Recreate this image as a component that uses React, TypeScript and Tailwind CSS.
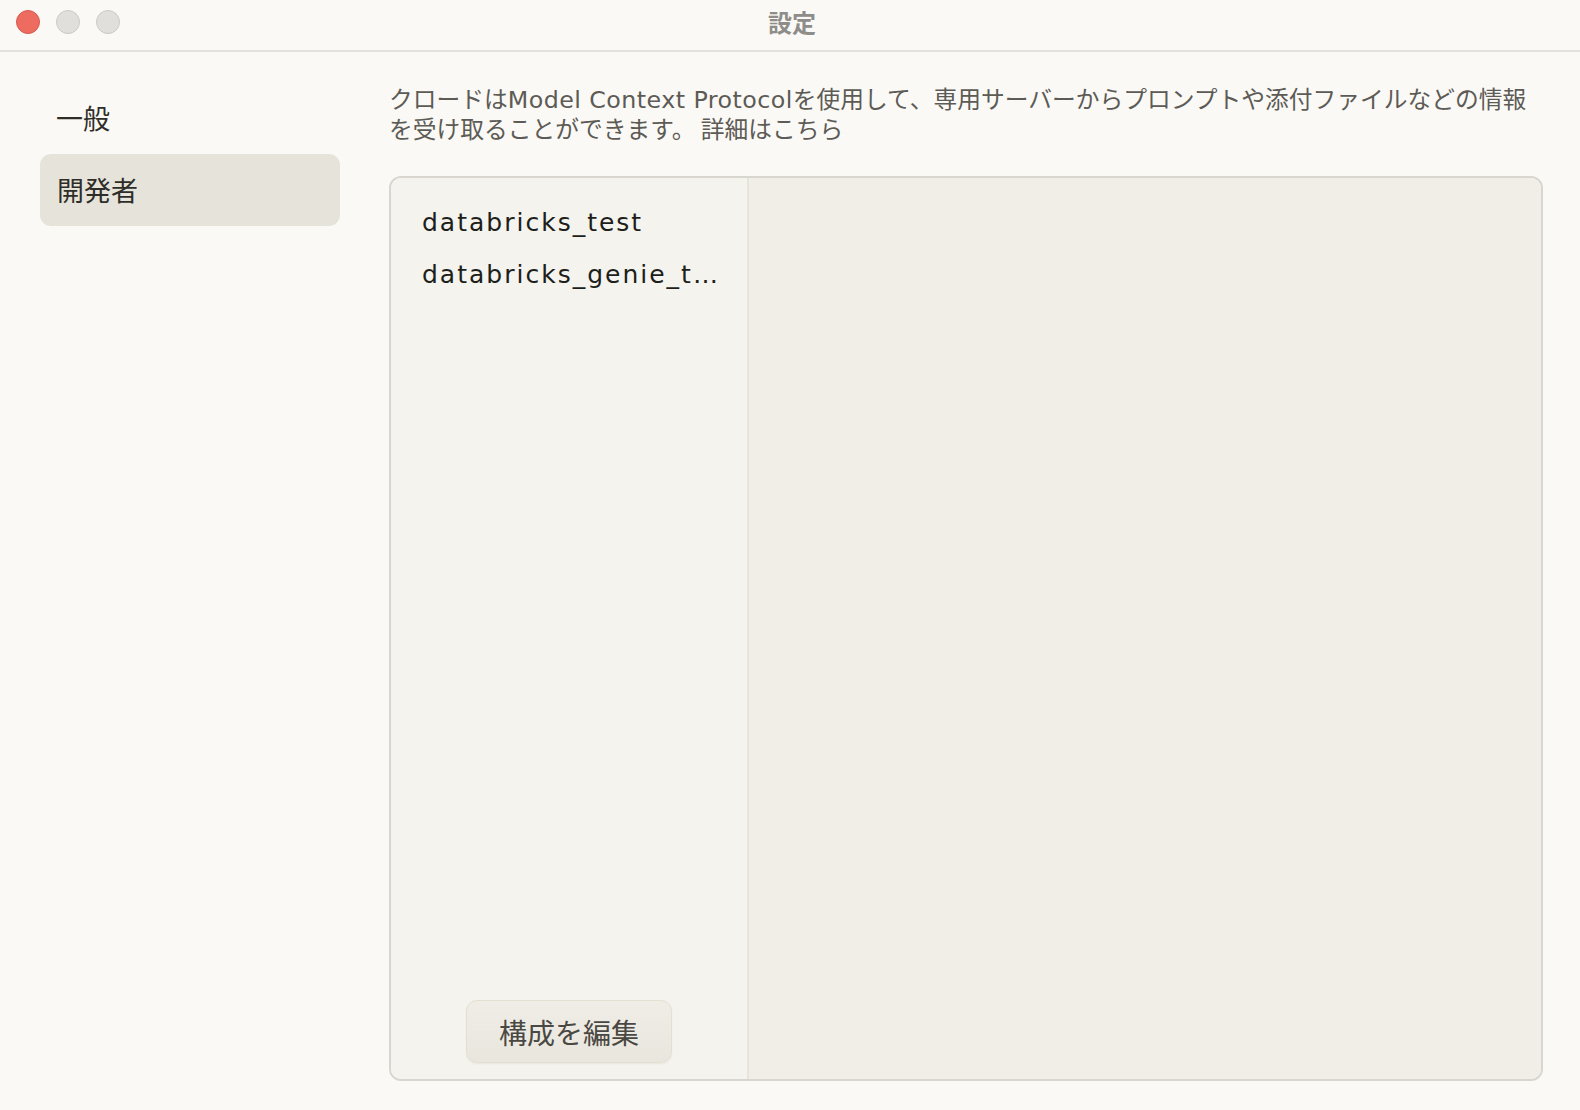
import React from "react";

export default function App() {
  const jp = { fontFamily: '"Noto Sans CJK JP", "Noto Sans", sans-serif' };
  const latin = { fontFamily: '"DejaVu Sans", "Noto Sans", sans-serif' };
  return (
    <div
      className="w-[1580px] h-[1110px] bg-[#faf9f5] flex flex-col overflow-hidden text-[#2f2d28]"
      style={jp}
    >
      {/* Title bar */}
      <div className="relative h-[52px] shrink-0 border-b-2 border-[#e3e1db] flex items-center justify-center">
        <div className="absolute left-[16px] top-[10px] flex gap-[16px]">
          <div className="w-[24px] h-[24px] rounded-full bg-[#ee6b60] border border-[#d85a4f]" />
          <div className="w-[24px] h-[24px] rounded-full bg-[#e0dfdc] border border-[#cbcac6]" />
          <div className="w-[24px] h-[24px] rounded-full bg-[#e0dfdc] border border-[#cbcac6]" />
        </div>
        <div className="text-[24px] font-bold text-[#8e8d89] leading-none -mt-[7px] ml-[4px]">設定</div>
      </div>

      {/* Body */}
      <div className="flex-1 flex min-h-0">
        {/* Sidebar */}
        <div className="w-[389px] shrink-0 pl-[40px] pr-[49px] pt-[30px] flex flex-col">
          <div className="h-[72px] flex items-center pl-[16px] text-[27px] text-[#2f2d28]">一般</div>
          <div className="h-[72px] flex items-center pl-[17px] text-[27px] text-[#2f2d28] bg-[#e6e4da] rounded-[11px]">
            開発者
          </div>
        </div>

        {/* Main */}
        <div className="flex-1 min-w-0 pr-[37px] pt-[31px] pb-[29px] flex flex-col">
          <p className="text-[23.75px] leading-[30px] text-[#5d5b55]">
            クロードは
            <span className="tracking-[0.45px] leading-[20px]" style={latin}>
              Model Context Protocol
            </span>
            を使用して、専用サーバーからプロンプトや添付ファイルなどの情報を受け取ることができます。 詳細はこちら
          </p>

          <div className="mt-[33px] flex-1 flex border-2 border-[#d8d6cf] rounded-[12px] overflow-hidden">
            <div className="w-[358px] shrink-0 bg-[#f4f3ee] border-r-2 border-[#e6e4dd] flex flex-col">
              <div
                className="pt-[25px] pl-[31px] flex flex-col text-[25px] text-[#201e1a] tracking-[2px]"
                style={latin}
              >
                <div className="w-[305px] h-[40px] leading-[40px] truncate">databricks_test</div>
                <div className="w-[305px] h-[40px] leading-[40px] mt-[12px] truncate">databricks_genie_tools</div>
              </div>
              <div className="flex-1" />
              <div className="flex justify-center pb-[16px]">
                <button className="w-[206px] h-[63px] rounded-[11px] border border-[#e3e0d2] bg-gradient-to-b from-[#efede6] to-[#e8e6dd] shadow-[0_1px_2px_rgba(0,0,0,0.06)] text-[28px] text-[#4a4842]">
                  構成を編集
                </button>
              </div>
            </div>
            <div className="flex-1 bg-[#f0eee7]" />
          </div>
        </div>
      </div>
    </div>
  );
}
